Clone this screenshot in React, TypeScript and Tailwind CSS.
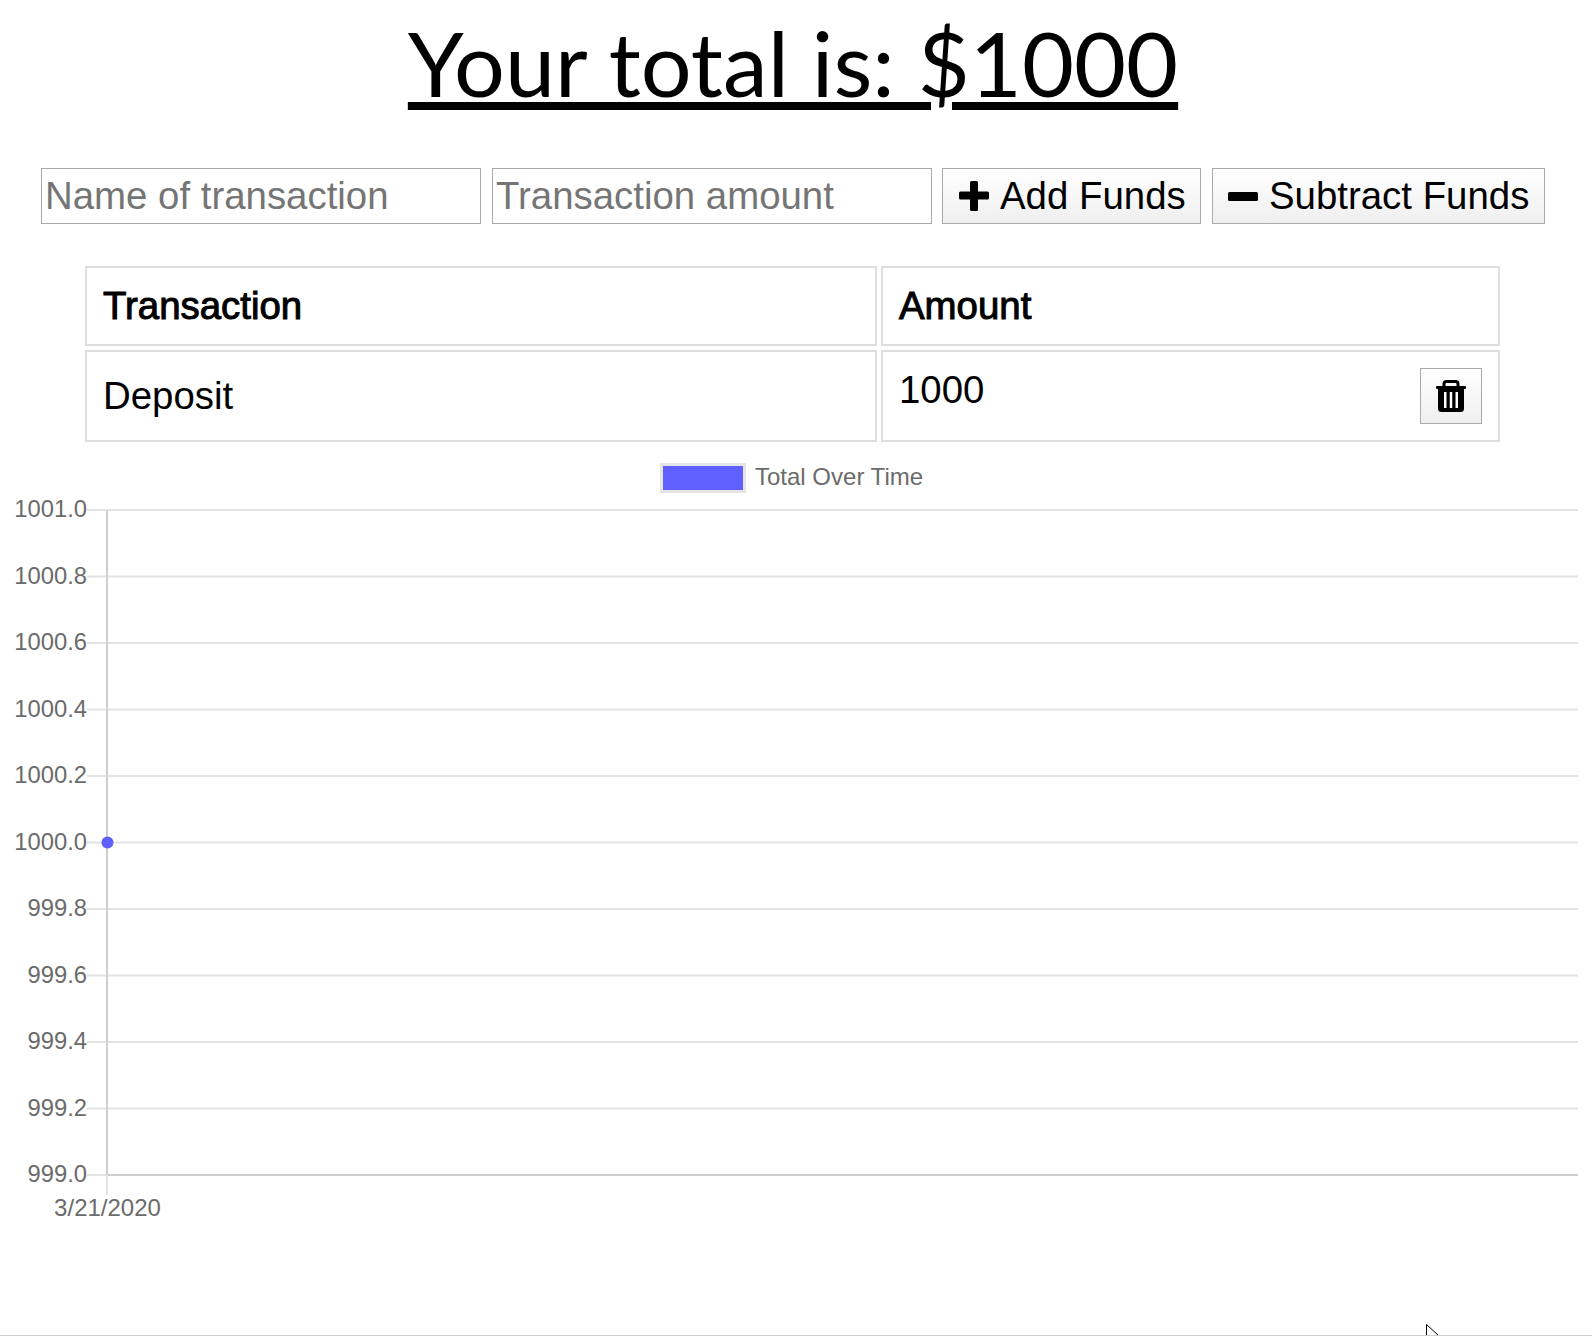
const yLabels = ['1001.0', '1000.8', '1000.6', '1000.4', '1000.2', '1000.0', '999.8', '999.6', '999.4', '999.2', '999.0']
const top = 49
const step = 66.5

const PlusIcon = () => (
  <svg width="30" height="30" viewBox="0 0 30 30" className="shrink-0">
    <path d="M12.5 0h5a1.5 1.5 0 0 1 1.5 1.5V10.500h9.500a1.500 1.500 0 0 1 1.500 1.500v5a1.500 1.500 0 0 1-1.500 1.500H19v10a1.500 1.500 0 0 1-1.500 1.500h-5a1.500 1.500 0 0 1-1.500-1.500v-10H1.500A1.500 1.500 0 0 1 0 17v-5a1.500 1.500 0 0 1 1.500-1.500H11V1.500A1.500 1.500 0 0 1 12.500 0z" />
  </svg>
)

const MinusIcon = () => (
  <svg width="30" height="9" viewBox="0 0 30 9" className="shrink-0">
    <rect width="30" height="9" rx="1.500" />
  </svg>
)

const TrashIcon = () => (
  <svg width="30" height="32" viewBox="0 0 30 32">
    <path d="M8 7V4a2.500 2.500 0 0 1 2.500-2.500h9A2.500 2.500 0 0 1 22 4v3" fill="none" stroke="black" strokeWidth="3" />
    <rect x="0" y="6" width="30" height="3" rx="1" />
    <path d="M2 8h26v20.500a3.500 3.500 0 0 1-3.500 3.500h-19A3.500 3.500 0 0 1 2 28.500z" />
    <rect x="8" y="12" width="2.500" height="16" fill="white" />
    <rect x="13.750" y="12" width="2.500" height="16" fill="white" />
    <rect x="19.500" y="12" width="2.500" height="16" fill="white" />
  </svg>
)

const Chart = () => {
  return (
    <svg className="block w-[1592px] h-[800px]" viewBox="0 0 1592 800" fontFamily="'Liberation Sans', Arial, sans-serif">
      <rect x="661.5" y="3.5" width="83" height="27" fill="#6060ff" stroke="#e5e5e5" strokeWidth="3" />
      <text x="755" y="24" fontSize="24" fill="#6b6b6b">Total Over Time</text>
      {yLabels.map((label, i) => {
        const y = top + i * step
        return (
          <g key={label}>
            <line x1="87" x2="1578" y1={y} y2={y} stroke={i === 10 ? '#cfcfcf' : '#e3e3e3'} strokeWidth="2" />
            <text x="87" y={y + 7} textAnchor="end" fontSize="23.8" fill="#6b6b6b">{label}</text>
          </g>
        )
      })}
      <line x1="87" x2="107" y1={top + 665} y2={top + 665} stroke="#e3e3e3" strokeWidth="2" />
      <line x1="107" x2="107" y1={top} y2={top + 665} stroke="#cfcfcf" strokeWidth="2" />
      <line x1="107" x2="107" y1={top + 665} y2={top + 685} stroke="#e3e3e3" strokeWidth="2" />
      <circle cx="107.500" cy={top + 332.500} r="6" fill="#6060ff" />
      <text x="107.500" y={top + 706} textAnchor="middle" fontSize="24" fill="#6b6b6b">3/21/2020</text>
    </svg>
  )
}

const App = () => {
  return (
    <div className="relative h-[1336px] overflow-hidden bg-white font-['Liberation_Sans',Arial,sans-serif] text-black">
      <h1 className="pt-[5px] pr-[6px] text-center font-['Lato',sans-serif] text-[89.8px] leading-[115px] font-normal underline decoration-[8px] underline-offset-[5px]">
        Your total is: $1000
      </h1>

      <form className="mt-[48px] flex h-[56px] gap-[11px] pl-[41px]">
        <input
          type="text"
          placeholder="Name of transaction"
          className="h-[56px] w-[440px] border border-[#a9a9a9] px-[3px] text-[38.4px] placeholder:text-[#757575]"
        />
        <input
          type="text"
          placeholder="Transaction amount"
          className="mr-[-1px] h-[56px] w-[440px] border border-[#a9a9a9] px-[3px] text-[38.4px] placeholder:text-[#757575]"
        />
        <button
          type="button"
          className="flex h-[56px] w-[259px] items-center gap-[11px] border border-[#a9a9a9] bg-gradient-to-b from-white to-[#efefef] pl-[16px] text-[38.4px]">
          <PlusIcon /> Add Funds
        </button>
        <button
          type="button"
          className="flex h-[56px] w-[333px] items-center gap-[11px] border border-[#a9a9a9] bg-gradient-to-b from-white to-[#efefef] pl-[15px] text-[38.4px]">
          <MinusIcon /> Subtract Funds
        </button>
      </form>

      <table className="mt-[38px] ml-[81px] w-[1423px] border-separate border-spacing-[4px] text-[38.4px]">
        <thead>
          <tr>
            <th className="h-[80px] w-[792px] border-2 border-[#dedede] px-[16px] text-left font-normal [-webkit-text-stroke:1px_black]">Transaction</th>
            <th className="h-[80px] border-2 border-[#dedede] px-[16px] text-left font-normal [-webkit-text-stroke:1px_black]">Amount</th>
          </tr>
        </thead>
        <tbody>
          <tr>
            <td className="h-[92px] border-2 border-[#dedede] px-[16px]">Deposit</td>
            <td className="h-[92px] border-2 border-[#dedede] px-[16px] pt-[9px] align-top">
              1000
              <button
                type="button"
                className="float-right mt-[7px] flex h-[56px] w-[62px] items-center justify-center border border-[#a9a9a9] bg-gradient-to-b from-white to-[#efefef]">
                <TrashIcon />
              </button>
            </td>
          </tr>
        </tbody>
      </table>

      <div className="mt-[15px]">
        <Chart />
      </div>

      <svg className="absolute left-[1426px] top-[1324px]" width="16" height="12" viewBox="0 0 16 12">
        <path d="M0.5 0.5V12M0.5 0.5L13 12" fill="white" stroke="black" />
      </svg>
      <div className="absolute inset-x-0 bottom-0 h-[1px] bg-[#cfcfcf]" />
    </div>
  )
}

export default App
